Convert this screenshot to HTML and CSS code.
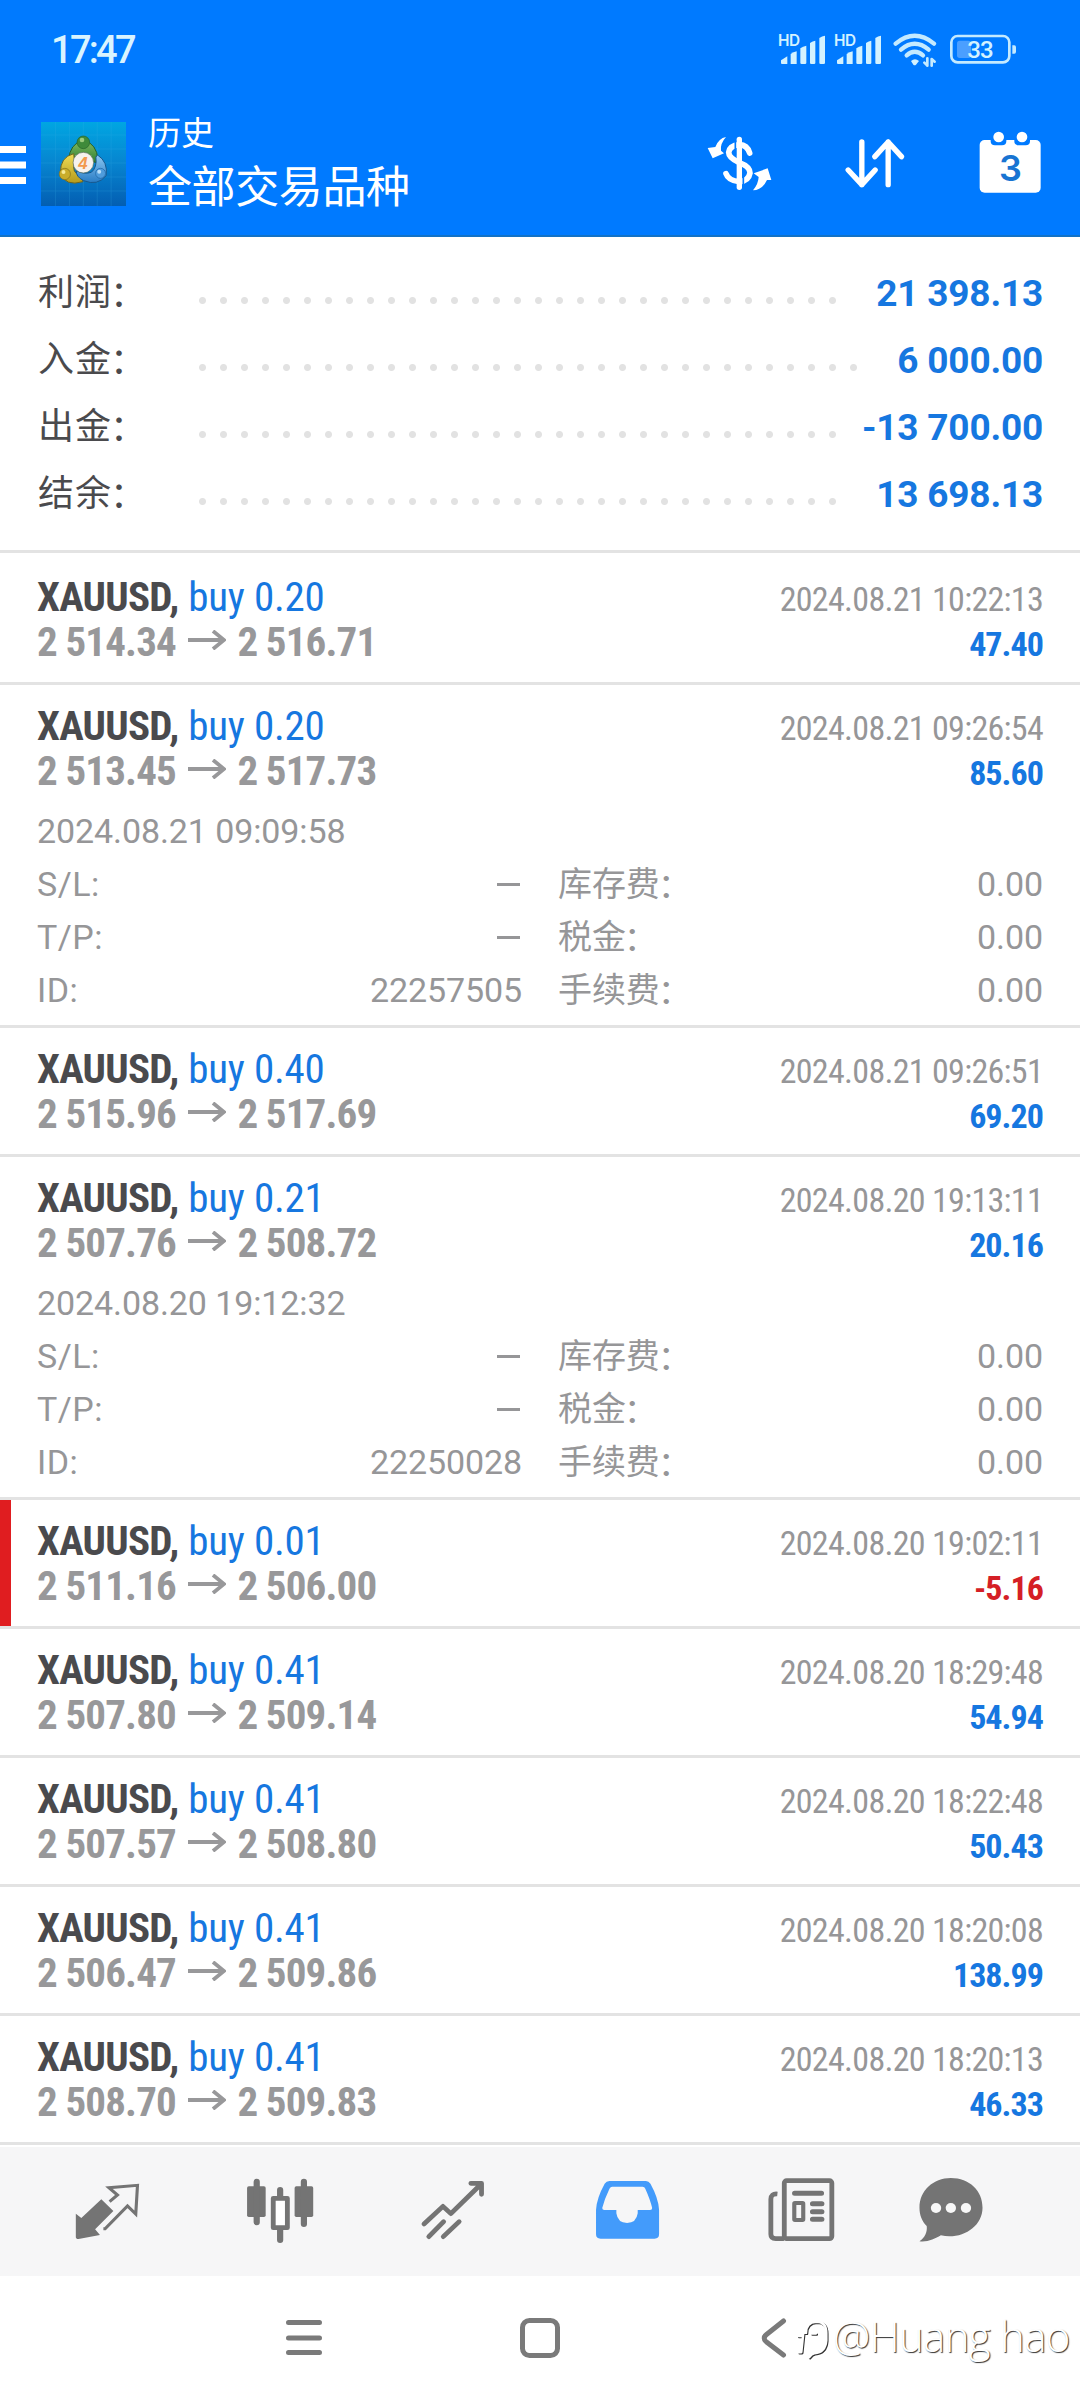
FILE: index.html
```html
<!DOCTYPE html>
<html lang="zh-CN">
<head>
<meta charset="utf-8">
<title>历史</title>
<link rel="stylesheet" href="styles.css">
</head>
<body>
<div class="screen">
  <header class="header">
    <div class="status">
      <span class="clock">17:47</span>
      <div class="status-icons">
        <svg class="signal" viewBox="294 96 150 108"><text x="294" y="137" class="hd">HD</text><g fill="#d3f2ff"><path d="M303 181l19-12v23h-16q-3 0-3-3z"/><path d="M332 162q8-6 18-8v38h-18z"/><path d="M361 145q8-6 18-8v52q0 3-4 3h-10q-4 0-4-3z"/><path d="M390 129q8-6 16-7v67q0 3-4 3h-8q-4 0-4-3z"/><path d="M418 114q8-6 17-7v82q0 3-4 3h-9q-4 0-4-3z"/></g></svg>
        <svg class="signal" viewBox="294 96 150 108"><text x="294" y="137" class="hd">HD</text><g fill="#d3f2ff"><path d="M303 181l19-12v23h-16q-3 0-3-3z"/><path d="M332 162q8-6 18-8v38h-18z"/><path d="M361 145q8-6 18-8v52q0 3-4 3h-10q-4 0-4-3z"/><path d="M390 129q8-6 16-7v67q0 3-4 3h-8q-4 0-4-3z"/><path d="M418 114q8-6 17-7v82q0 3-4 3h-9q-4 0-4-3z"/></g></svg>
        <svg class="wifi" viewBox="636 96 138 108"><g fill="none" stroke="#c4eaff" stroke-width="13" stroke-linecap="round"><path d="M647 131Q704 84 762 131"/><path d="M663 149Q704 114 746 149"/><path d="M680 166Q704 145 729 166"/></g><path d="M693 183q12-10 24 0l-9 11q-4 4-8 0z" fill="#d3f2ff"/><g fill="none" stroke="#c4eaff" stroke-width="8" stroke-linecap="round" stroke-linejoin="round"><path d="M742 175v22M733 188l9 9"/><path d="M755 197v-20l9 8"/></g></svg>
        <svg class="battery" viewBox="804 96 210 108"><rect x="814" y="108" width="174" height="79" rx="19" fill="none" stroke="#c4eaff" stroke-width="8"/><rect x="831" y="122" width="42" height="52" rx="8" fill="#4b9fff"/><path d="M997 136h6q5 0 5 6v13q0 6-5 6h-6z" fill="#c4eaff"/><text x="900" y="174" text-anchor="middle" class="charge">33</text></svg>
      </div>
    </div>
    <div class="appbar">
      <svg class="menu" viewBox="0 0 26 40"><path d="M0 4.500h26M0 20h26M0 35.500h26" stroke="#fff" stroke-width="7"/></svg>
      <svg class="logo" viewBox="33 37 257 252" preserveAspectRatio="none">
        <defs>
          <linearGradient id="sky" x1="0" y1="0" x2="0" y2="1"><stop offset="0" stop-color="#00a6e2"/><stop offset=".5" stop-color="#0784cf"/><stop offset="1" stop-color="#035eb2"/></linearGradient>
          <linearGradient id="green" x1="0" y1="0" x2="0" y2="1"><stop offset="0" stop-color="#86bd62"/><stop offset="1" stop-color="#2c7d31"/></linearGradient>
          <linearGradient id="gold" x1="0" y1="0" x2="0" y2="1"><stop offset="0" stop-color="#f0dd57"/><stop offset="1" stop-color="#b59a1b"/></linearGradient>
          <linearGradient id="blue" x1="0" y1="0" x2="0" y2="1"><stop offset="0" stop-color="#8cc8f2"/><stop offset="1" stop-color="#297cc5"/></linearGradient>
        </defs>
        <rect x="33" y="37" width="257" height="252" fill="url(#sky)"/>
        <path d="M77 37v252M119 37v252M161 37v252M203 37v252M245 37v252M33 76h257M33 118h257M33 160h257M33 202h257M33 244h257" stroke="#3db1e6" stroke-width="2" opacity=".3"/>
        <path d="M117 150q2-46 44-60q42 14 44 60l-2 10-24-8q-18-24-40 0l-18 2z" fill="url(#green)" stroke="#225f2a" stroke-width="3"/>
        <path d="M132 132q-42 10-40 58q14 42 68 26l-9-20q-26-5-17-40z" fill="url(#gold)" stroke="#6b6421" stroke-width="3"/>
        <path d="M204 136q32 20 26 62q-26 32-68 15q-24-12-22-30q24 12 45 5q18-14 14-46z" fill="url(#blue)" stroke="#16578d" stroke-width="3"/>
        <circle cx="161" cy="98" r="19" fill="#3f8a3a" stroke="#256328" stroke-width="2"/>
        <circle cx="157" cy="91" r="7" fill="#9ccb7c"/>
        <circle cx="105" cy="193" r="17" fill="#c9ad2a" stroke="#80701c" stroke-width="2"/>
        <circle cx="101" cy="187" r="6" fill="#f6ea95"/>
        <circle cx="213" cy="191" r="15" fill="#4f9cdc" stroke="#1c64a3" stroke-width="2"/>
        <circle cx="209" cy="186" r="6" fill="#b9def8"/>
        <circle cx="161" cy="159" r="31" fill="#f6f2ee" stroke="#5b6d5c" stroke-width="2"/>
        <text x="160" y="178" text-anchor="middle" class="four">4</text>
      </svg>
      <div class="titles">
        <div class="title">历史</div>
        <div class="subtitle">全部交易品种</div>
      </div>
      <div class="actions">
        <svg viewBox="69 381 216 216"><g fill="none" stroke="#fff" stroke-linecap="round"><path d="M178 418v144" stroke-width="16"/><path d="M209 459q-7-24-31-25-29 3-32 23 0 17 32 31 32 12 32 31-4 24-32 26-33-3-40-24" stroke-width="17"/></g><path d="M166 424v42M190 510v45" stroke="#007aff" stroke-width="5"/><path d="M138 411q-22 4-32 30l-23 3 15 31 34-15-9-8q-3-21 15-41z" fill="#fff"/><path d="M219 571q29-2 42-31h13l-11-35-42 15 15 11q-1 21-17 40z" fill="#fff"/></svg>
        <svg viewBox="478.500 381 216 216"><path d="M547 426v128M506 510l41 44 40-44M626 554V426M586 470l40-44 40 44" fill="none" stroke="#fff" stroke-width="16" stroke-linecap="round" stroke-linejoin="round"/></svg>
        <svg viewBox="882 381 216 216"><rect x="899" y="420" width="183" height="158" rx="15" fill="#fff"/><path d="M932 418h47v6q0 12-13 12h-21q-13 0-13-12zM1003 418h47v6q0 12-13 12h-21q-13 0-13-12z" fill="#007aff"/><circle cx="956" cy="411" r="16" fill="#fff"/><circle cx="1026" cy="411" r="16" fill="#fff"/><text x="991" y="543" text-anchor="middle" class="day">3</text></svg>
      </div>
    </div>
  </header>

  <section class="summary">
    <div class="total"><span class="label">利润<i>：</i></span><span class="dots"></span><b>21 398.13</b></div>
    <div class="total"><span class="label">入金<i>：</i></span><span class="dots dots-long"></span><b>6 000.00</b></div>
    <div class="total"><span class="label">出金<i>：</i></span><span class="dots"></span><b>-13 700.00</b></div>
    <div class="total"><span class="label">结余<i>：</i></span><span class="dots"></span><b>13 698.13</b></div>
  </section>

  <main class="deals">
    <article class="deal">
      <div class="line"><span class="name"><b>XAUUSD,</b> <span class="side">buy 0.20</span></span><span class="time">2024.08.21 10:22:13</span></div>
      <div class="line"><span class="prices">2 514.34<svg class="arrow" viewBox="0 0 38 20"><path d="M0 10h36M25 1l11 9-11 9"/></svg>2 516.71</span><span class="profit">47.40</span></div>
    </article>
    <article class="deal">
      <div class="line"><span class="name"><b>XAUUSD,</b> <span class="side">buy 0.20</span></span><span class="time">2024.08.21 09:26:54</span></div>
      <div class="line"><span class="prices">2 513.45<svg class="arrow" viewBox="0 0 38 20"><path d="M0 10h36M25 1l11 9-11 9"/></svg>2 517.73</span><span class="profit">85.60</span></div>
      <div class="details">
        <div class="opened">2024.08.21 09:09:58</div>
        <div class="pair"><span class="key">S/L:</span><span class="dash"></span></div><div class="pair"><span>库存费<i>：</i></span><span>0.00</span></div>
        <div class="pair"><span class="key">T/P:</span><span class="dash"></span></div><div class="pair"><span>税金<i>：</i></span><span>0.00</span></div>
        <div class="pair"><span class="key">ID:</span><span>22257505</span></div><div class="pair"><span>手续费<i>：</i></span><span>0.00</span></div>
      </div>
    </article>
    <article class="deal">
      <div class="line"><span class="name"><b>XAUUSD,</b> <span class="side">buy 0.40</span></span><span class="time">2024.08.21 09:26:51</span></div>
      <div class="line"><span class="prices">2 515.96<svg class="arrow" viewBox="0 0 38 20"><path d="M0 10h36M25 1l11 9-11 9"/></svg>2 517.69</span><span class="profit">69.20</span></div>
    </article>
    <article class="deal">
      <div class="line"><span class="name"><b>XAUUSD,</b> <span class="side">buy 0.21</span></span><span class="time">2024.08.20 19:13:11</span></div>
      <div class="line"><span class="prices">2 507.76<svg class="arrow" viewBox="0 0 38 20"><path d="M0 10h36M25 1l11 9-11 9"/></svg>2 508.72</span><span class="profit">20.16</span></div>
      <div class="details">
        <div class="opened">2024.08.20 19:12:32</div>
        <div class="pair"><span class="key">S/L:</span><span class="dash"></span></div><div class="pair"><span>库存费<i>：</i></span><span>0.00</span></div>
        <div class="pair"><span class="key">T/P:</span><span class="dash"></span></div><div class="pair"><span>税金<i>：</i></span><span>0.00</span></div>
        <div class="pair"><span class="key">ID:</span><span>22250028</span></div><div class="pair"><span>手续费<i>：</i></span><span>0.00</span></div>
      </div>
    </article>
    <article class="deal loss">
      <div class="line"><span class="name"><b>XAUUSD,</b> <span class="side">buy 0.01</span></span><span class="time">2024.08.20 19:02:11</span></div>
      <div class="line"><span class="prices">2 511.16<svg class="arrow" viewBox="0 0 38 20"><path d="M0 10h36M25 1l11 9-11 9"/></svg>2 506.00</span><span class="profit">-5.16</span></div>
    </article>
    <article class="deal">
      <div class="line"><span class="name"><b>XAUUSD,</b> <span class="side">buy 0.41</span></span><span class="time">2024.08.20 18:29:48</span></div>
      <div class="line"><span class="prices">2 507.80<svg class="arrow" viewBox="0 0 38 20"><path d="M0 10h36M25 1l11 9-11 9"/></svg>2 509.14</span><span class="profit">54.94</span></div>
    </article>
    <article class="deal">
      <div class="line"><span class="name"><b>XAUUSD,</b> <span class="side">buy 0.41</span></span><span class="time">2024.08.20 18:22:48</span></div>
      <div class="line"><span class="prices">2 507.57<svg class="arrow" viewBox="0 0 38 20"><path d="M0 10h36M25 1l11 9-11 9"/></svg>2 508.80</span><span class="profit">50.43</span></div>
    </article>
    <article class="deal">
      <div class="line"><span class="name"><b>XAUUSD,</b> <span class="side">buy 0.41</span></span><span class="time">2024.08.20 18:20:08</span></div>
      <div class="line"><span class="prices">2 506.47<svg class="arrow" viewBox="0 0 38 20"><path d="M0 10h36M25 1l11 9-11 9"/></svg>2 509.86</span><span class="profit">138.99</span></div>
    </article>
    <article class="deal">
      <div class="line"><span class="name"><b>XAUUSD,</b> <span class="side">buy 0.41</span></span><span class="time">2024.08.20 18:20:13</span></div>
      <div class="line"><span class="prices">2 508.70<svg class="arrow" viewBox="0 0 38 20"><path d="M0 10h36M25 1l11 9-11 9"/></svg>2 509.83</span><span class="profit">46.33</span></div>
    </article>
  </main>

  <nav class="tabs">
    <svg viewBox="207 135 209 216" preserveAspectRatio="none"><path d="M221 251l16 13 58-56 35 35-53 55 14 17-62 12q-8 0-8-6z" fill="#747474"/><path d="M319 215l23-20-25-22 83-7-5 86-24-24-65 68h-5" fill="none" stroke="#747474" stroke-width="9"/></svg>
    <svg viewBox="711 135 209 216" preserveAspectRatio="none"><g fill="#747474"><rect x="717" y="169" width="54" height="92" rx="5"/><rect x="855" y="169" width="54" height="92" rx="5"/></g><g fill="none" stroke="#747474" stroke-linecap="round" stroke-width="18"><path d="M745 155v122M882 155v127M813 180v18M813 298v32"/></g><rect x="793" y="205" width="41" height="88" fill="#fff" stroke="#747474" stroke-width="14" stroke-linejoin="round"/></svg>
    <svg viewBox="1214.600 135 209 216" preserveAspectRatio="none"><path d="M1232 282l55-53 23 22 88-89M1368 160h31v33M1246 320l43-45M1288 320l46-45" fill="none" stroke="#747474" stroke-width="14" stroke-linecap="round" stroke-linejoin="round"/></svg>
    <svg viewBox="150.300 135 209 216" preserveAspectRatio="none"><path fill-rule="evenodd" d="M201 153h106q8 0 13 8 23 43 25 78v74q0 13-13 13H175q-13 0-13-13v-74q2-35 25-78 5-8 14-8zM209 170q-5 0-8 6-14 30-21 58 0 6 6 6h35v10q4 29 31 29t31-29v-10h36q6 0 6-6-6-26-20-58-2-6-8-6z" fill="#439bfb"/></svg>
    <svg viewBox="654 135 209 216" preserveAspectRatio="none"><g fill="none" stroke="#747474" stroke-width="14"><rect x="710" y="152" width="138" height="174" rx="7"/><path d="M690 192q-19-2-19 16v105q0 13 14 13h24"/><path d="M740 190h78M792 221h27M792 245h27M792 268h27" stroke-linecap="round" stroke-width="15"/><rect x="739" y="219" width="26" height="51" rx="2" stroke-width="12"/></g></svg>
    <svg viewBox="1089 135 209 216" preserveAspectRatio="none"><path d="M1193 144c54 0 92 38 92 89 0 58-61 97-121 83-17 11-39 21-62 18 17-13 23-28 21-46-14-15-21-33-21-55 0-51 40-89 91-89z" fill="#747474"/><g fill="#f7f7f7"><circle cx="1150" cy="234" r="15"/><circle cx="1193" cy="234" r="15"/><circle cx="1237" cy="234" r="15"/></g></svg>
  </nav>

  <footer class="system">
    <svg class="recents" viewBox="0 0 40 40"><path d="M4.500 4.500h31M4.500 20h31M4.500 34.500h31"/></svg>
    <svg class="home" viewBox="0 0 40 40"><rect x="2.500" y="2.500" width="35" height="35" rx="7"/></svg>
    <svg class="back" viewBox="0 0 26 40"><path d="M22.500 3L5.500 16.500Q1 20 5.500 24L22.500 37"/></svg>
    <div class="credit">
      <svg viewBox="748 575 90 130"><path d="M752 682h8l6-57h8q0-32 30-33 30 0 30 33v22q-3 36-35 38-8 0-16 12M750 634h14M790 627h13"/></svg>
      <span>@Huang hao</span>
    </div>
  </footer>
</div>
</body>
</html>
```
FILE: styles.css
```css
* { box-sizing: border-box; }
body {
  margin: 0;
  background: #fff;
  font-family: Roboto, "Noto Sans CJK SC", sans-serif;
}
svg { display: block; flex: none; }
.screen {
  display: flex;
  flex-direction: column;
  width: 1080px;
  height: 2400px;
  overflow: hidden;
}

.header { height: 237px; background: #007aff; color: #fff; border-bottom: 2px solid #1272c6; }
.status { display: flex; justify-content: space-between; height: 113px; padding: 32px 62px 0 51px; }
.clock { font-size: 38px; font-weight: 500; line-height: 36px; letter-spacing: -2.7px; color: #d9f4ff; }
.status-icons { display: flex; height: 36px; }
.signal { width: 50px; height: 36px; margin-right: 6px; }
.wifi { width: 46px; height: 36px; margin: 0 10px 0 2px; }
.battery { width: 70px; height: 36px; }
.hd { font: 600 46px Inter, sans-serif; fill: #d3f2ff; letter-spacing: -1px; }
.charge { font: 500 72px Roboto, sans-serif; fill: #d3f2ff; letter-spacing: -3px; }
.appbar { display: flex; align-items: flex-start; padding-right: 34px; }
.menu { width: 26px; height: 40px; margin-top: 32px; }
.logo { width: 85px; height: 84px; margin: 9px 22px 0 15px; }
.four { font: italic 700 51px "Liberation Sans", sans-serif; fill: #f29a4e; }
.title { font-size: 33px; line-height: 42px; }
.subtitle { font-size: 44px; line-height: 66px; letter-spacing: -0.4px; }
.actions { display: flex; gap: 63.5px; margin: 14px 0 0 auto; }
.actions svg { width: 72px; height: 72px; }
.day { font: 600 108px Inter, sans-serif; fill: #1874d2; }

.summary { height: 316px; padding: 23px 37px 0 38px; border-bottom: 3px solid #e3e3e3; }
.total { display: flex; align-items: center; height: 67px; line-height: 67px; }
.label { width: 154px; font-size: 36px; letter-spacing: 1px; color: #4a4a4d; white-space: nowrap; }
i { position: relative; top: 2px; font-style: normal; margin-left: -2px; }
.dots {
  width: 651px;
  height: 21px;
  margin-top: 14px;
  background: radial-gradient(circle at center, #e2e2e2 3px, transparent 4px) 0 0 / 21px 21px;
}
.dots-long { width: 672px; }
.total b { margin: -1px 0 0 auto; font-size: 37px; letter-spacing: -0.2px; color: #1677e0; white-space: nowrap; }

.deal { height: 129px; padding: 19px 37px 0; border-top: 3px solid #e3e3e3; }
.deal:first-child { border-top-color: #fff; }
.deal:has(.details) { height: 343px; }
.line { display: flex; justify-content: space-between; align-items: baseline; height: 45px; line-height: 45px; white-space: nowrap; font-stretch: 75%; }
.name { font-size: 41px; letter-spacing: -0.75px; color: #4a4a4d; }
.side { margin-left: 1px; color: #1677e0; letter-spacing: -0.2px; }
.time { font-size: 34px; letter-spacing: -0.7px; color: #969698; }
.prices { font-size: 41px; font-weight: 700; letter-spacing: -0.85px; color: #98989a; }
.arrow { display: inline-block; width: 38px; height: 20px; margin: 0 11.5px 0 12px; vertical-align: 6px; }
.arrow path { fill: none; stroke: #98989a; stroke-width: 3.8; }
.profit { font-size: 34px; font-weight: 700; letter-spacing: -0.95px; color: #1677e0; }
.loss { box-shadow: inset 11px 0 #e01d20; }
.loss .profit { color: #d51f26; }
.details {
  display: grid;
  grid-template-columns: 485px 485px;
  column-gap: 36px;
  margin-top: 11px;
  line-height: 53px;
  font-size: 34px;
  letter-spacing: -0.1px;
  color: #969698;
}
.opened { grid-column: 1 / -1; }
.pair { display: flex; justify-content: space-between; align-items: center; }
.key { letter-spacing: 0.5px; }
.dash { width: 23px; height: 3px; margin-right: 2px; background: #969698; }

.tabs {
  display: grid;
  grid-template-columns: repeat(5, 173.5px) 126px;
  justify-items: center;
  height: 134px;
  padding: 30px 0 0 20.5px;
  border-top: 3px solid #e3e3e3;
  background: linear-gradient(#fff 2px, #f6f6f7 2px);
}
.tabs svg { width: 72px; height: 72px; }

.system { display: flex; position: relative; flex: 1; padding: 42px 0 0 284px; background: #fff; }
.system svg { fill: none; stroke: #7a7a7a; stroke-width: 5; stroke-linecap: round; stroke-linejoin: round; }
.recents { width: 40px; height: 40px; }
.home { width: 40px; height: 40px; margin-left: 196px; }
.back { width: 26px; height: 40px; margin-left: 201px; }
.credit {
  position: absolute;
  left: 797px;
  top: 33px;
  display: flex;
  align-items: center;
  font: 300 42px/54px "Open Sans", "Noto Sans", sans-serif;
  letter-spacing: -0.7px;
  color: #fff;
  white-space: nowrap;
  text-shadow: 1px 1px 1px #333;
}
.system .credit svg { width: 31px; height: 44px; margin: 4px 5px 0 0; stroke: #fff; stroke-width: 7; filter: drop-shadow(1px 1px .5px #333); }
```
